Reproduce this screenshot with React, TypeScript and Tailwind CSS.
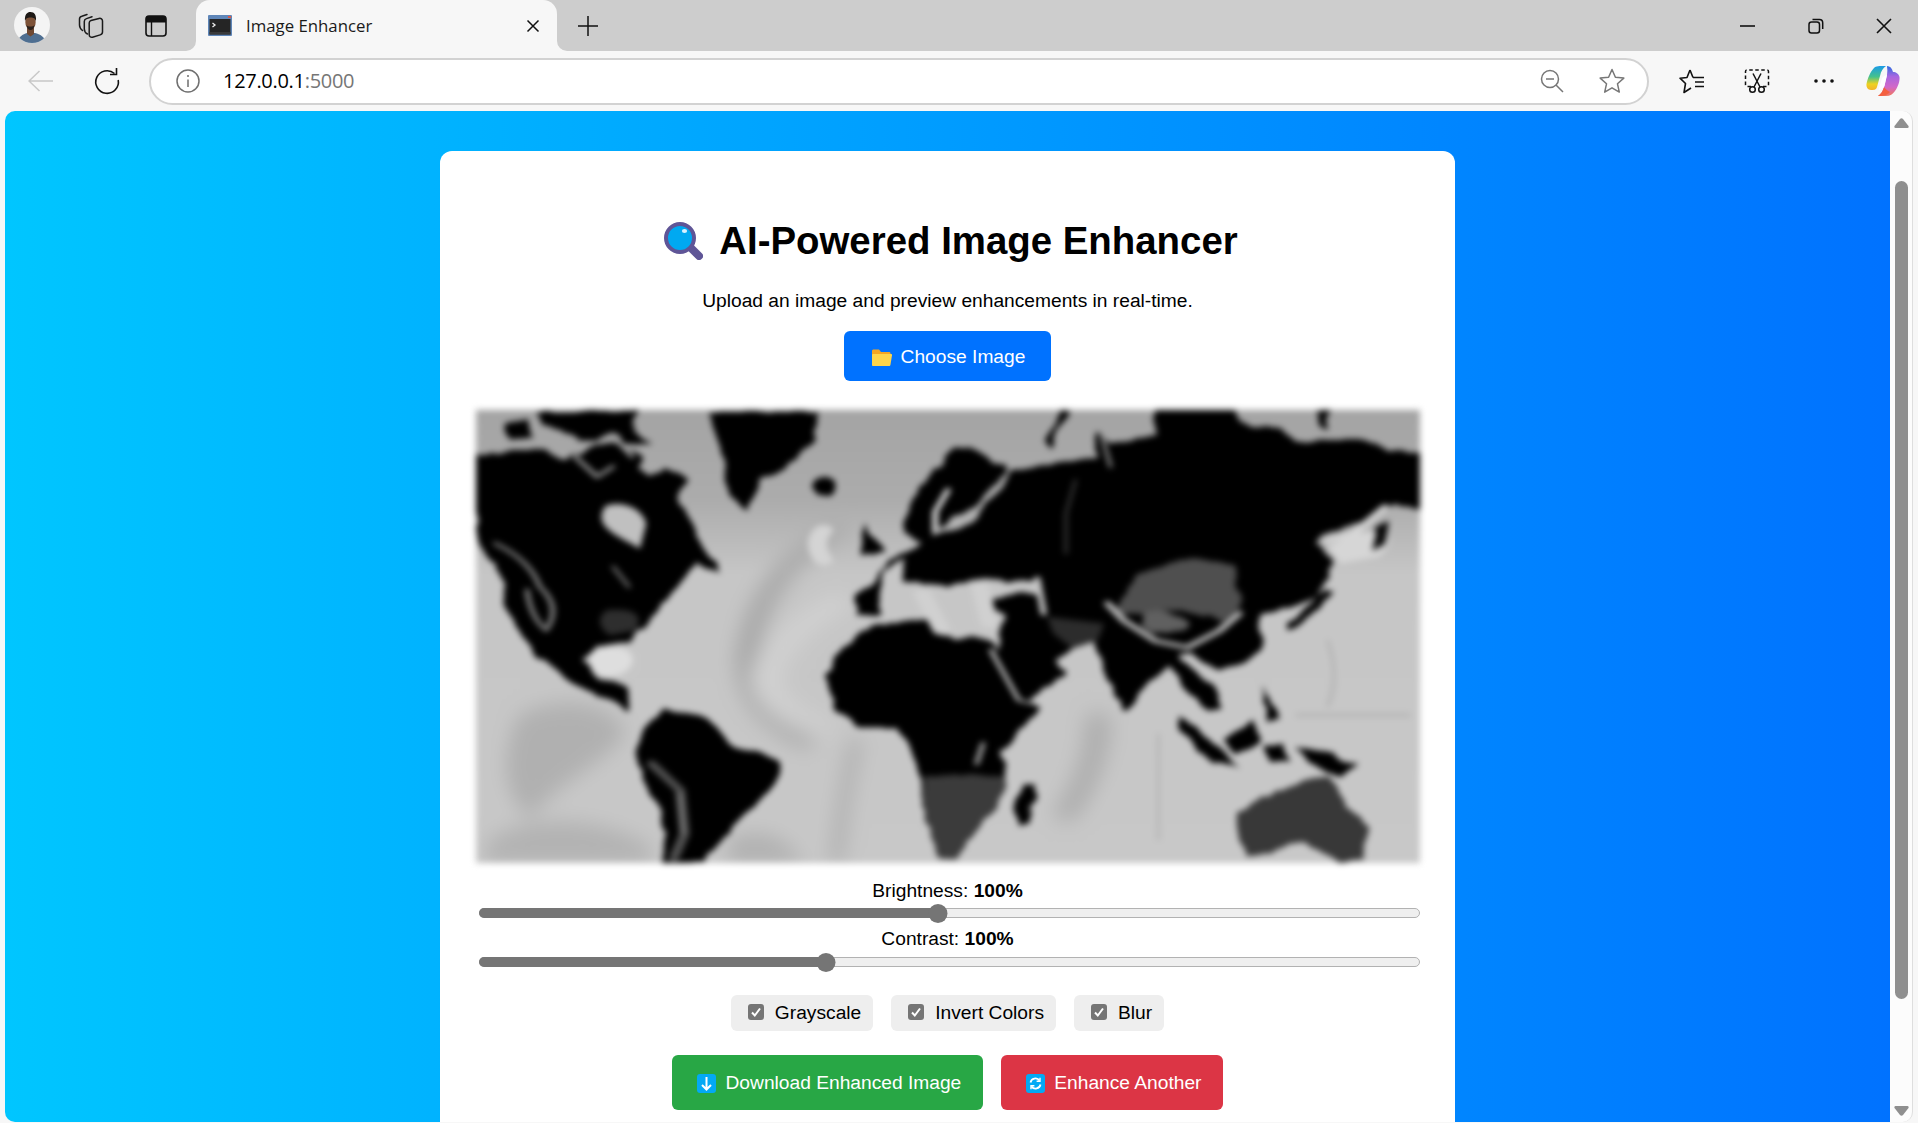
import React from "react";

const sans = "font-['Liberation_Sans',Arial,sans-serif]";

function Avatar() {
  return (
    <svg width="36" height="36" viewBox="0 0 36 36">
      <defs><clipPath id="av"><circle cx="18" cy="18" r="18" /></clipPath></defs>
      <g clipPath="url(#av)">
        <rect width="36" height="36" fill="#f4f4f4" />
        <path d="M3 36 C4 30 9 27 13 26 L21 26 C26 27 31 30 32 36 Z" fill="#4f6f91" />
        <path d="M13 21 L20 21 L20 27 L16.5 29.5 L13 27 Z" fill="#6e4832" />
        <ellipse cx="16.5" cy="15" rx="5.2" ry="7.4" fill="#7d5238" />
        <path d="M11 14 C10.5 7.5 13 5 16.5 5 C20.5 5 22.5 8 22 14 C21 11.5 20 10.5 16.5 10.5 C13 10.5 12 11.5 11 14 Z" fill="#1d1815" />
        <path d="M12.5 18 C13 22 15 23 16.5 23 C18 23 20 22 20.5 18 C19 20 14 20 12.5 18 Z" fill="#2b211c" />
      </g>
    </svg>
  );
}

function Collections() {
  return (
    <svg width="26" height="26" viewBox="0 0 26 26" fill="none" stroke="#1a1a1a" strokeWidth="1.5" strokeLinejoin="round" strokeLinecap="round">
      <path d="M4.5 17.5 C2.5 16 1.5 14 1.5 12 L1.5 6 C1.5 4.5 2.5 3.5 3.8 3.2 L9 1.5" />
      <path d="M9.5 21 C7.5 20 6.3 18.5 6.3 16 L6.3 8.5 C6.3 7 7.2 6 8.5 5.6 L14 3.8" />
      <path d="M13 7.5 L21 5.4 C23 5 24.5 6 24.5 8 L24.5 19 C24.5 20.5 23.5 21.5 22.2 21.9 L14.5 24.2 C12.5 24.6 11.2 23.5 11.2 21.5 L11.2 10 C11.2 8.8 11.9 7.8 13 7.5 Z" />
    </svg>
  );
}

function TabsPane() {
  return (
    <svg width="22" height="22" viewBox="0 0 22 22" fill="none">
      <rect x="1" y="1" width="20" height="20" rx="3" stroke="#111" strokeWidth="1.6" />
      <path d="M1 4 a3 3 0 0 1 3 -3 h14 a3 3 0 0 1 3 3 v3.5 H1 Z" fill="#111" />
      <path d="M6.5 7 V21" stroke="#111" strokeWidth="1.4" />
    </svg>
  );
}

function Favicon() {
  return (
    <svg width="24" height="21" viewBox="0 0 24 21">
      <rect width="24" height="21" rx="1" fill="#5f86b8" />
      <rect x="1.5" y="4" width="21" height="15.5" fill="#252525" />
      <rect x="1.5" y="17" width="21" height="2.5" fill="#3a3a3a" />
      <path d="M4.5 8 L7 10 L4.5 12" fill="none" stroke="#eee" strokeWidth="1.3" />
      <rect x="20" y="1" width="3" height="2" fill="#d65a4a" />
    </svg>
  );
}

function Copilot() {
  return (
    <svg width="34" height="32" viewBox="0 0 34 32">
      <defs>
        <linearGradient id="cpa" x1="0" y1="0" x2="0" y2="1">
          <stop offset="0" stopColor="#1a9be8" />
          <stop offset="0.45" stopColor="#45c28c" />
          <stop offset="0.75" stopColor="#eed21f" />
          <stop offset="1" stopColor="#f3b32a" />
        </linearGradient>
        <linearGradient id="cpb" x1="0" y1="0" x2="0" y2="1">
          <stop offset="0" stopColor="#2b6ce0" />
          <stop offset="0.35" stopColor="#a866e0" />
          <stop offset="0.7" stopColor="#d268c8" />
          <stop offset="1" stopColor="#f0775a" />
        </linearGradient>
      </defs>
      <path d="M8 3 C10 1 13 1 20 1 C17 3 15 6 14 11 L11 22 C10 25 8 25 5 25 C2 25 0 22 0.5 19 C1.5 14 4 7 8 3 Z" fill="url(#cpa)" />
      <path d="M21 1 C24 1 26 3 27 7 C30 7 33 9 33.5 12 C34 16 32 22 29 26 C27 29 24 31 20 31 L12 31 C15 29 17 26 18 22 L21 10 C21.5 7 21.5 4 21 1 Z" fill="url(#cpb)" />
      <path d="M12 31 C15 31 21 31 24 27 C20 25 19 23 18 22 C17 26 15 29 12 31 Z" fill="#f4603f" />
      <path d="M16 13 C18 11 20 10 21 10 L18.5 21 C17 24 14.5 25 12.5 25 Z" fill="#ffffff" />
    </svg>
  );
}

function WorldMap() {
  return (
    <svg width="944" height="453" viewBox="25 30 1480 1358" preserveAspectRatio="none" className="block blur-[3px]">
      <defs>
        <linearGradient id="sea" x1="0" y1="0" x2="0" y2="1">
          <stop offset="0" stopColor="#a4a4a4" />
          <stop offset="0.2" stopColor="#acacac" />
          <stop offset="0.36" stopColor="#c6c6c6" />
          <stop offset="1" stopColor="#c8c8c8" />
        </linearGradient>
        <filter id="soft" x="-10%" y="-10%" width="120%" height="120%">
          <feGaussianBlur stdDeviation="14 30" />
        </filter>
        <filter id="rough" x="-5%" y="-5%" width="110%" height="110%">
          <feTurbulence type="fractalNoise" baseFrequency="0.022 0.012" numOctaves="3" seed="4" result="n" />
          <feDisplacementMap in="SourceGraphic" in2="n" scale="26" xChannelSelector="R" yChannelSelector="G" />
        </filter>
      </defs>
      <rect x="25" y="30" width="1480" height="1358" fill="url(#sea)" />
      <g filter="url(#soft)">
        <g fill="none" strokeLinecap="round">
          <path d="M590 390 Q470 520 450 760 Q445 930 540 1020" stroke="#aaaaaa" strokeWidth="40" />
          <path d="M590 610 Q490 720 480 840 Q490 930 560 980" stroke="#d0d0d0" strokeWidth="50" />
          <path d="M620 1030 Q600 1200 590 1380" stroke="#b4b4b4" strokeWidth="26" />
          <path d="M1000 960 Q1000 1100 950 1240" stroke="#b0b0b0" strokeWidth="44" />
        </g>
        <path d="M90 950 C150 880 240 900 260 1000 C220 1100 170 1120 110 1250 C70 1200 60 1080 90 950 Z" fill="#b0b0b0" />
        <path d="M40 1330 C100 1230 230 1250 300 1340 L300 1388 H40 Z" fill="#b2b2b2" />
        <path d="M420 1320 C480 1270 520 1330 540 1388 H420 Z" fill="#b0b0b0" />
      </g>
      <g fill="none">
        <path d="M1095 1000 V1320" stroke="#b0b0b0" strokeWidth="4" />
        <path d="M1360 720 Q1380 830 1360 920" stroke="#b4b4b4" strokeWidth="6" />
        <path d="M1310 945 H1490" stroke="#b4b4b4" strokeWidth="10" />
        <path d="M570 390 Q550 430 570 480" stroke="#d4d4d4" strokeWidth="30" strokeLinecap="round" />
      </g>

      <g fill="#060606" filter="url(#rough)">
        <path d="M70 75 L100 60 L112 115 L80 118 Z" />
        <path d="M115 35 L280 35 L268 75 L300 130 L262 125 L240 95 L210 125 L185 125 L165 85 L130 75 Z" />
        <path d="M20 170 L80 150 L130 150 L165 180 L210 135 L250 130 L285 165 L280 215 L300 230 L320 200 L358 245 L345 290 L360 350 L392 465 L412 518 L370 490 L345 545 L320 610 L285 680 L270 730 L212 735 L196 775 L216 830 L258 865 L268 935 L240 905 L205 872 L165 840 L128 768 L88 688 L68 600 L58 500 L32 425 L20 385 Z" />
        <path d="M385 35 L560 35 L552 130 L510 210 L472 240 L450 330 L420 285 L410 150 Z" />
        <ellipse cx="570" cy="262" rx="20" ry="28" />
        <path d="M320 925 L392 960 L432 1038 L502 1085 L502 1122 L472 1182 L442 1262 L404 1330 L387 1390 L313 1390 L322 1300 L308 1200 L278 1092 L278 1030 L298 960 Z" />
        <path d="M588 770 L640 678 L730 658 L770 712 L832 720 L882 870 L910 925 L882 990 L852 1050 L856 1160 L820 1270 L782 1372 L755 1378 L730 1270 L720 1130 L703 1040 L688 985 L625 985 L588 930 L578 830 Z" />
        <path d="M842 705 L860 620 L930 650 L965 745 L930 780 L950 820 L885 902 L870 880 L845 790 Z" />
        <path d="M890 1150 L905 1150 L896 1270 L876 1280 L873 1200 Z" />
        <path d="M860 215 L1000 170 L1000 90 L1020 130 L1090 100 L1090 30 L1215 30 L1220 70 L1290 85 L1310 120 L1420 120 L1460 155 L1515 160 L1515 332 L1460 312 L1420 362 L1350 402 L1340 430 L1368 482 L1345 590 L1292 622 L1252 640 L1258 720 L1232 792 L1192 812 L1150 762 L1125 762 L1194 880 L1198 930 L1170 932 L1128 852 L1110 800 L1062 880 L1045 938 L1020 840 L990 720 L960 745 L930 700 L880 665 L820 615 L880 572 L905 585 L900 530 L860 548 L800 538 L762 562 L700 545 L690 480 L665 510 L652 652 L622 645 L618 582 L650 552 L668 480 L720 430 L800 365 L842 285 Z" />
        <path d="M770 150 L802 145 L860 205 L812 320 L770 352 L730 432 L696 400 L710 290 Z" />
        <path d="M640 370 L662 452 L622 472 L628 420 Z" />
        <path d="M942 32 L958 32 L932 100 L928 145 L915 122 Z" />
        <path d="M1345 32 L1365 32 L1360 90 L1350 80 Z" />
        <path d="M1438 385 L1456 368 L1450 432 L1430 452 Z" />
        <path d="M1355 570 L1372 575 L1335 650 L1305 690 L1300 670 Z" />
        <path d="M1135 950 L1172 1005 L1222 1105 L1180 1085 L1132 995 Z" />
        <path d="M1200 1020 L1242 958 L1250 1032 L1216 1062 Z" />
        <path d="M1315 1035 L1405 1090 L1385 1125 L1335 1095 Z" />
        <path d="M1256 850 L1284 955 L1266 965 Z" />
        <path d="M1260 1040 L1290 1030 L1300 1080 L1270 1085 Z" />
      </g>

      <g filter="url(#rough)">
        <path d="M726 1125 L856 1125 L856 1160 L820 1270 L782 1372 L755 1378 L730 1270 Z" fill="#3b3b3b" />
        <path d="M1222 1236 L1280 1170 L1330 1140 L1362 1125 L1402 1230 L1428 1292 L1414 1372 L1374 1390 L1322 1325 L1282 1345 L1236 1376 L1218 1300 Z" fill="#383838" />
        <path d="M1060 522 L1130 482 L1216 492 L1226 600 L1192 662 L1130 622 L1060 642 L1030 632 Z" fill="#505050" />
        <path d="M1070 640 C1100 620 1130 640 1145 670 C1125 710 1090 710 1070 680 Z" fill="#606060" />
      </g>
      <path d="M230 630 C270 625 290 640 275 690 L235 705 C215 680 215 650 230 630 Z" fill="#2e2e2e" />
      <path d="M920 650 L1010 670 L1000 720 L960 745 L930 700 Z" fill="#2c2c2c" />

      <g fill="none" strokeLinecap="round" strokeLinejoin="round">
        <path d="M55 430 Q110 480 125 560 Q160 620 135 690 Q110 650 105 570" stroke="#808080" strokeWidth="8" />
        <path d="M1015 610 L1040 660 L1090 722 L1140 742 L1190 692 L1222 640" stroke="#c0c0c0" strokeWidth="12" />
        <path d="M832 750 L876 900 L905 912" stroke="#c8c8c8" strokeWidth="7" />
        <path d="M905 535 L915 640" stroke="#c4c4c4" strokeWidth="10" />
        <path d="M300 1090 L345 1170 L352 1300 L335 1375" stroke="#505050" strokeWidth="16" />
        <path d="M345 1180 L350 1300" stroke="#8a8a8a" strokeWidth="4" />
        <path d="M765 270 L745 335 L745 395" stroke="#cfcfcf" strokeWidth="10" />
        <path d="M965 240 L950 340 L950 460" stroke="#3c3c3c" strokeWidth="5" />
        <path d="M1005 100 L1020 200" stroke="#8a8a8a" strokeWidth="6" />
        <path d="M820 1030 L810 1090" stroke="#a0a0a0" strokeWidth="8" />
        <path d="M1450 320 L1400 400 L1360 420" stroke="#dadada" strokeWidth="12" />
        <path d="M725 580 L755 690 M815 560 L830 670" stroke="#d0d0d0" strokeWidth="28" />
        <path d="M240 500 L265 560" stroke="#7a7a7a" strokeWidth="6" />
        <path d="M180 170 L215 230 L240 200 M240 110 L270 170" stroke="#9a9a9a" strokeWidth="8" />
      </g>
      <path d="M205 760 C215 730 265 730 270 770 C275 810 245 835 225 830 C205 820 198 790 205 760 Z" fill="#dedede" />
      <path d="M1400 400 C1460 380 1470 420 1440 470 L1380 490 L1360 440 Z" fill="#d6d6d6" />
      <path d="M1438 385 L1456 368 L1450 432 L1430 452 Z" fill="#060606" />
      <path d="M228 318 C250 300 285 320 292 370 L282 445 C250 410 205 380 228 318 Z" fill="#c0c0c0" />
    </svg>
  );
}

function Slider({ value }: { value: number }) {
  return (
    <div className="relative h-[10px] w-[941px] rounded-full border border-[#b2b2b2] bg-[#efefef]">
      <div className="absolute -inset-px rounded-full bg-[#757575]" style={{ right: `${941 - value}px` }} />
      <div className="absolute top-[-5px] h-[19px] w-[19px] -translate-x-1/2 rounded-full bg-[#757575]" style={{ left: `${value}px` }} />
    </div>
  );
}

function Check({ label }: { label: string }) {
  return (
    <label className="flex h-9 items-center gap-[11px] rounded-md bg-[#eeeeee] pl-[17px] pr-3 text-[19.2px] text-black">
      <span className="-mt-[2px] flex h-4 w-4 items-center justify-center rounded-[3px] bg-[#757575]">
        <svg width="12" height="12" viewBox="0 0 12 12" fill="none" stroke="#fff" strokeWidth="2">
          <path d="M2 6.5 L4.8 9.5 L10 2.5" />
        </svg>
      </span>
      {label}
    </label>
  );
}

export default function App() {
  return (
    <div className="flex h-[1123px] w-[1918px] flex-col overflow-hidden bg-[#f7f7f7]">
      <div className="flex h-[51px] shrink-0 items-center bg-[#cdcdcd]">
        <div className="ml-[14px] -mt-[1px] h-9 w-9"><Avatar /></div>
        <div className="ml-[28px] h-[26px] w-[26px]"><Collections /></div>
        <div className="ml-[41px] h-[22px] w-[22px]"><TabsPane /></div>
        <div className="relative ml-[29px] mt-auto flex h-[51px] w-[361px] items-center self-end rounded-t-[14px] bg-[#f7f7f7] pl-[12px]">
          <svg className="absolute bottom-0 left-[-10px]" width="10" height="10" viewBox="0 0 10 10"><path d="M10 0 V10 H0 A10 10 0 0 0 10 0 Z" fill="#f7f7f7" /></svg>
          <svg className="absolute bottom-0 right-[-10px]" width="10" height="10" viewBox="0 0 10 10"><path d="M0 0 V10 H10 A10 10 0 0 1 0 0 Z" fill="#f7f7f7" /></svg>
          <Favicon />
          <span className="ml-[14px] font-['Open_Sans',sans-serif] text-[16.8px] text-[#1a1a1a]">Image Enhancer</span>
          <svg className="absolute left-[330px] top-[19px]" width="14" height="14" viewBox="0 0 14 14" stroke="#111" strokeWidth="1.5"><path d="M1.5 1.5 L12.5 12.5 M12.5 1.5 L1.5 12.5" /></svg>
        </div>
        <svg className="ml-[21px]" width="20" height="20" viewBox="0 0 20 20" stroke="#111" strokeWidth="1.5"><path d="M10 0 V20 M0 10 H20" /></svg>
        <div className="flex-1" />
        <svg width="16" height="16" viewBox="0 0 16 16" stroke="#111" strokeWidth="1.6"><path d="M0 8 H15" /></svg>
        <svg className="ml-[52px]" width="16" height="16" viewBox="0 0 16 16" fill="none" stroke="#111" strokeWidth="1.5"><rect x="1" y="4" width="10.5" height="11" rx="2.5" /><path d="M4.5 1.5 H11.5 C13.5 1.5 14.7 2.8 14.7 4.8 V11" /></svg>
        <svg className="ml-[52px] mr-[26px]" width="16" height="16" viewBox="0 0 16 16" stroke="#111" strokeWidth="1.6"><path d="M1 1 L15 15 M15 1 L1 15" /></svg>
      </div>

      <div className="flex h-[60px] shrink-0 items-center">
        <svg className="ml-[28px]" width="26" height="24" viewBox="0 0 26 24" fill="none" stroke="#c8c8c8" strokeWidth="1.5"><path d="M1 12 H25 M11.5 2 L1 12 L11.5 22" /></svg>
        <svg className="ml-[39px]" width="28" height="28" viewBox="0 0 28 28" fill="none" stroke="#111" strokeWidth="1.6"><path d="M21.5 6.5 A11.3 11.3 0 1 0 25.2 13" /><path d="M23.5 1 V7.5 H17" /></svg>
        <div className="ml-[28px] flex h-[47px] w-[1500px] items-center rounded-full border-2 border-[#d2d2d2] bg-white">
          <svg className="ml-[25px]" width="24" height="24" viewBox="0 0 24 24" fill="none" stroke="#6f6f6f" strokeWidth="1.5"><circle cx="12" cy="12" r="11" /><path d="M12 10.5 V18 M12 6 V8" /></svg>
          <span className="ml-[23px] font-['Open_Sans',sans-serif] text-[20px] tracking-[-0.3px] text-black">127.0.0.1<span className="text-[#767676]">:5000</span></span>
          <div className="flex-1" />
          <svg width="24" height="24" viewBox="0 0 24 24" fill="none" stroke="#777" strokeWidth="1.5"><circle cx="10" cy="10" r="8.5" /><path d="M6 10 H14 M16 16 L23 23" /></svg>
          <svg className="ml-[35px] mr-[22px]" width="26" height="26" viewBox="0 0 26 26" fill="none" stroke="#777" strokeWidth="1.5" strokeLinejoin="round"><path d="M13 1.5 L16.4 9.3 L24.8 10.1 L18.5 15.8 L20.3 24.1 L13 19.8 L5.7 24.1 L7.5 15.8 L1.2 10.1 L9.6 9.3 Z" /></svg>
        </div>
        <svg className="ml-[30px]" width="26" height="26" viewBox="0 0 26 26" fill="none" stroke="#111" strokeWidth="1.6" strokeLinejoin="round"><path d="M11 2 L14 9.5 M11 2 L8 9.5 L1 10.2 L6.5 15.5 L5 24.5 L12 20" /><path d="M14 9.5 L25 9.5 M16 14 H25 M16 18.5 H25" /></svg>
        <svg className="ml-[39px]" width="26" height="26" viewBox="0 0 26 26" fill="none" stroke="#111" strokeWidth="1.5"><path d="M7 18.5 H3 C2 18.5 1.5 18 1.5 17 V3.5 C1.5 2.5 2 2 3 2 H23 C24 2 24.5 2.5 24.5 3.5 V17 C24.5 18 24 18.5 23 18.5 H19" strokeDasharray="3.5 2.5" /><path d="M9 5.5 L16 19 M17 5.5 L10 19" /><circle cx="8.5" cy="21.5" r="2.8" /><circle cx="17.5" cy="21.5" r="2.8" /></svg>
        <svg className="ml-[44px]" width="20" height="6" viewBox="0 0 20 6" fill="#111"><circle cx="2" cy="3" r="1.8" /><circle cx="10" cy="3" r="1.8" /><circle cx="18" cy="3" r="1.8" /></svg>
        <div className="ml-[32px]"><Copilot /></div>
      </div>

      <div className="flex flex-1 overflow-hidden pb-px pl-[5px] pr-[5px]">
        <main className={`flex-1 overflow-hidden rounded-l-[10px] bg-[linear-gradient(90deg,#00c6ff,#0072ff)] pt-10 ${sans}`}>
          <div className="ml-[435px] flex h-[1100px] w-[1015px] flex-col items-center rounded-xl bg-white pt-[68px] text-black">
            <h1 className="flex h-[44px] items-center gap-[9px] text-[38.4px] font-bold">
              <span className="flex w-[53px] justify-center">
                <svg width="39" height="38" viewBox="0 0 39 38">
                  <path d="M27 26 L35 34" stroke="#5f5597" strokeWidth="8" strokeLinecap="round" />
                  <circle cx="16" cy="16" r="14" fill="#00a9f1" stroke="#5f5597" strokeWidth="4" />
                  <ellipse cx="20.5" cy="9" rx="2.6" ry="2" fill="#d8f2ff" />
                </svg>
              </span>
              AI-Powered Image Enhancer
            </h1>
            <p className="mt-[26px] h-6 text-[19.2px] leading-6">Upload an image and preview enhancements in real-time.</p>
            <button className="mt-[18px] flex h-[50px] items-center gap-[9px] rounded-md bg-[#0072ff] pl-[28px] pr-[26px] pt-[2px] text-[19.2px] text-white">
              <svg width="20" height="17" viewBox="0 0 20 17">
                <path d="M0 2 C0 1 .8 .5 1.5 .5 H7 L9 3 H17 C18 3 18.5 3.5 18.5 4.5 V8 H0 Z" fill="#f5a623" />
                <path d="M0 16 V6 C0 5.2 .6 5 1.5 5 H19 C19.8 5 20 5.5 20 6.3 L18.5 15.5 C18.3 16.5 17.8 17 17 17 H1.2 C.4 17 0 16.6 0 16 Z" fill="#ffd54a" />
              </svg>
              Choose Image
            </button>
            <div className="mt-[29px]"><WorldMap /></div>
            <p className="mt-4 h-6 text-[19.2px] leading-6">Brightness: <b>100%</b></p>
            <div className="mt-[5px] pl-1"><Slider value={458} /></div>
            <p className="mt-[9px] h-6 text-[19.2px] leading-6">Contrast: <b>100%</b></p>
            <div className="mt-[6px] pl-1"><Slider value={346} /></div>
            <div className="mt-7 flex gap-[18px]">
              <Check label="Grayscale" />
              <Check label="Invert Colors" />
              <Check label="Blur" />
            </div>
            <div className="mt-6 flex gap-[18px]">
              <button className="flex h-[55px] items-center gap-[10px] rounded-md bg-[#28a745] pl-[25px] pr-[22px] pt-[2px] text-[19.2px] text-white">
                <span className="flex h-[19px] w-[19px] items-center justify-center rounded-[3px] bg-[#03a9f4]">
                  <svg width="11" height="14" viewBox="0 0 11 14" fill="none" stroke="#fff" strokeWidth="2"><path d="M5.5 0 V12 M1 8 L5.5 12.5 L10 8" /></svg>
                </span>
                Download Enhanced Image
              </button>
              <button className="flex h-[55px] items-center gap-[9px] rounded-md bg-[#dc3545] pl-[25px] pr-[22px] pt-[2px] text-[19.2px] text-white">
                <span className="flex h-[19px] w-[19px] items-center justify-center rounded-[3px] bg-[#03a9f4]">
                  <svg width="13" height="13" viewBox="0 0 13 13" fill="none" stroke="#fff" strokeWidth="1.8"><path d="M1.5 5.5 A5 5 0 0 1 10.5 3.5 M11.5 7.5 A5 5 0 0 1 2.5 9.5" /><path d="M11 .8 V4.2 H7.6 M2 12.2 V8.8 H5.4" strokeWidth="1.4" /></svg>
                </span>
                Enhance Another
              </button>
            </div>
          </div>
        </main>
        <div className="flex w-[23px] flex-col items-center rounded-r-[10px] border-r border-[#dedede] bg-[#fcfcfc] pt-[7px]">
          <svg width="15" height="10" viewBox="0 0 15 10" fill="#8f8f8f"><path d="M6 1 C6.8 0 8.2 0 9 1 L14.5 8 C15 9 14.5 10 13.5 10 H1.5 C.5 10 0 9 .5 8 Z" /></svg>
          <div className="mt-[53px] h-[818px] w-[13px] rounded-full bg-[#8f8f8f]" />
          <svg className="mt-[107px]" width="15" height="10" viewBox="0 0 15 10" fill="#8f8f8f"><path d="M6 9 C6.8 10 8.2 10 9 9 L14.5 2 C15 1 14.5 0 13.5 0 H1.5 C.5 0 0 1 .5 2 Z" /></svg>
        </div>
      </div>
    </div>
  );
}
